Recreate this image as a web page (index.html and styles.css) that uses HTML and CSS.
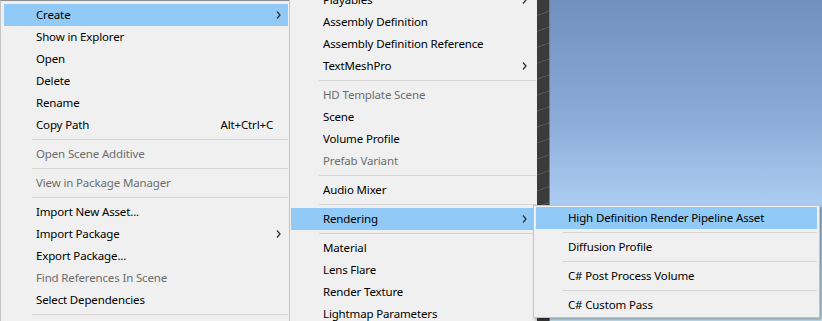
FILE: index.html
```html
<!DOCTYPE html>
<html lang="en">
<head>
    <meta charset="UTF-8">
    <title>Project Context Menu</title>
    <link rel="stylesheet" href="styles.css">
</head>
<body>
    <div class="desktop">
        <div class="menu menu-main">
            <div class="item active"><span>Create</span><svg class="arrow" width="5" height="8" viewBox="0 0 5 8"><path d="M1 0.5 L4 4 L1 7.5"/></svg></div>
            <div class="item">Show in Explorer</div>
            <div class="item">Open</div>
            <div class="item">Delete</div>
            <div class="item">Rename</div>
            <div class="item"><span>Copy Path</span><span class="shortcut">Alt+Ctrl+C</span></div>
            <div class="sep"></div>
            <div class="item disabled">Open Scene Additive</div>
            <div class="sep"></div>
            <div class="item disabled">View in Package Manager</div>
            <div class="sep"></div>
            <div class="item">Import New Asset...</div>
            <div class="item"><span>Import Package</span><svg class="arrow" width="5" height="8" viewBox="0 0 5 8"><path d="M1 0.5 L4 4 L1 7.5"/></svg></div>
            <div class="item">Export Package...</div>
            <div class="item disabled">Find References In Scene</div>
            <div class="item">Select Dependencies</div>
            <div class="sep"></div>
        </div>

        <div class="menu menu-create">
            <div class="item"><span>Playables</span><svg class="arrow" width="5" height="8" viewBox="0 0 5 8"><path d="M1 0.5 L4 4 L1 7.5"/></svg></div>
            <div class="item">Assembly Definition</div>
            <div class="item">Assembly Definition Reference</div>
            <div class="item"><span>TextMeshPro</span><svg class="arrow" width="5" height="8" viewBox="0 0 5 8"><path d="M1 0.5 L4 4 L1 7.5"/></svg></div>
            <div class="sep"></div>
            <div class="item disabled">HD Template Scene</div>
            <div class="item">Scene</div>
            <div class="item">Volume Profile</div>
            <div class="item disabled">Prefab Variant</div>
            <div class="sep"></div>
            <div class="item">Audio Mixer</div>
            <div class="sep"></div>
            <div class="item active"><span>Rendering</span><svg class="arrow" width="5" height="8" viewBox="0 0 5 8"><path d="M1 0.5 L4 4 L1 7.5"/></svg></div>
            <div class="sep"></div>
            <div class="item">Material</div>
            <div class="item">Lens Flare</div>
            <div class="item">Render Texture</div>
            <div class="item">Lightmap Parameters</div>
        </div>

        <div class="scene-edge"></div>
        <div class="sky"></div>

        <!-- Rendering submenu pops over the rest -->
        <div class="menu menu-rendering">
            <div class="item active">High Definition Render Pipeline Asset</div>
            <div class="sep"></div>
            <div class="item">Diffusion Profile</div>
            <div class="sep"></div>
            <div class="item">C# Post Process Volume</div>
            <div class="sep"></div>
            <div class="item">C# Custom Pass</div>
        </div>
    </div>
</body>
</html>
```

FILE: styles.css
```css
body {
    margin: 0;
    padding: 0;
    font-family: "Noto Sans", "Open Sans", sans-serif;
    font-size: 11.5px;
    letter-spacing: -0.15px;
    color: #000;
    background-color: #f0f0f0;
}
.desktop {
    position: relative;
    display: flex;
    width: 822px;
    height: 321px;
    overflow: hidden;
}
.menu {
    box-sizing: border-box;
    flex-shrink: 0;
    background-color: #f0f0f0;
    border: 1px solid #c4c4c4;
}
.menu-main {
    width: 290px;
    height: 340px;
    padding: 3px 1px 0 3px;
    border-top-color: #8c8c8c;
}
.menu-create {
    width: 249px;
    height: 360px;
    margin-left: -1px;
    margin-top: -13px;
    padding: 1px 1px 0 1px;
}
.menu-rendering {
    position: absolute;
    left: 533px;
    top: 205px;
    width: 287px;
    padding: 1px 2px 1px 2px;
    box-shadow: 2px 2px 3px rgba(0, 0, 0, 0.35);
}
.item {
    display: flex;
    align-items: center;
    height: 22px;
    line-height: 22px;
    padding: 0 7px 0 32px;
    white-space: nowrap;
}
.item.active {
    background-color: #91c9f7;
}
.item.disabled {
    color: #6d6d6d;
}
.shortcut {
    margin-left: auto;
    margin-right: 8px;
}
.arrow {
    margin-left: auto;
    fill: none;
    stroke: #333;
    stroke-width: 1.3;
}
.menu-create .arrow {
    margin-right: 2px;
}
.sep {
    height: 1px;
    margin: 3px 0 3px 28px;
    background-color: #d4d4d4;
}
.menu-rendering .sep {
    margin-left: 27px;
}
.scene-edge {
    flex-shrink: 0;
    width: 12px;
    margin-left: -1px;
    background-color: #3b3b3b;
    border-right: 1px solid #7a7a7a;
    background-image: repeating-linear-gradient(160deg, transparent 0 14px, #555 14px 15px);
}
.sky {
    flex: 1;
    background: linear-gradient(to bottom, #7090bd 0%, #8aa9d6 35%, #a9cbf0 62%, #c8e8fc 90%, #d2f0ff 100%);
}
```
